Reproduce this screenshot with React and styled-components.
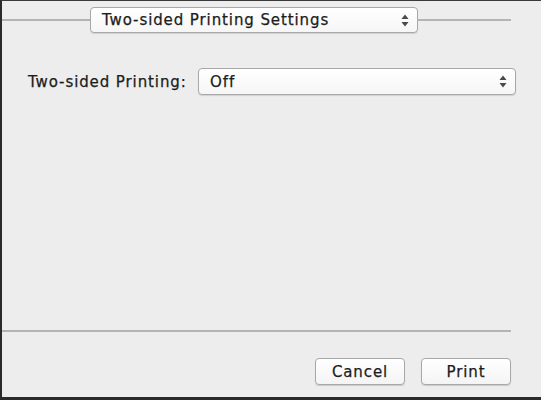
import React from "react";
import styled, { createGlobalStyle } from "styled-components";

const Global = createGlobalStyle`
  html, body { margin: 0; padding: 0; }
  body { background: #ececec; font-family: "DejaVu Sans", "Liberation Sans", sans-serif; }
`;

const Frame = styled.div`
  box-sizing: border-box;
  width: 541px;
  height: 400px;
  background: #ededed;
  border-left: 2px solid #2a2a2a;
  border-bottom: 3px solid #2a2a2a;
  border-top: 1px solid #3a3a3a;
  display: flex;
  flex-direction: column;
`;

const Header = styled.div`
  display: flex;
  align-items: center;
  height: 26px;
  margin: 6px 30px 0 0;
`;

const Rule = styled.div`
  height: 2px;
  background: #b4b4b4;
  flex: ${(p) => (p.$grow ? 1 : "none")};
  width: ${(p) => (p.$w ? `${p.$w}px` : "auto")};
  margin-right: ${(p) => p.$mr || 0}px;
`;

const textLook = `
  font-size: 15px;
  letter-spacing: 0.9px;
  color: #1c1c1c;
  -webkit-text-stroke: 0.25px #1c1c1c;
`;

const Popup = styled.div`
  box-sizing: border-box;
  display: flex;
  align-items: center;
  flex: ${(p) => (p.$w ? "none" : 1)};
  height: ${(p) => p.$h || 26}px;
  width: ${(p) => (p.$w ? `${p.$w}px` : "auto")};
  padding: 0 8px 0 11px;
  background: linear-gradient(#ffffff, #f6f6f6);
  border: 1px solid #a8a8a8;
  border-radius: 4px;
  box-shadow: 0 1px 1px rgba(0, 0, 0, 0.12);
  ${textLook}
`;

const PopupText = styled.span`
  flex: 1;
`;

const Arrows = () => (
  <svg width="8" height="13" viewBox="0 0 8 13">
    <path d="M4 0.5 L7.5 5 H0.5 Z" fill="#4a4a4a" />
    <path d="M4 12.5 L7.5 8 H0.5 Z" fill="#4a4a4a" />
  </svg>
);

const Body = styled.div`
  flex: 1;
  display: flex;
  flex-direction: column;
`;

const Row = styled.div`
  display: flex;
  align-items: center;
  margin-top: 35px;
  padding: 0 25px 0 26px;
`;

const Label = styled.span`
  ${textLook}
  width: 170px;
`;

const Footer = styled.div`
  display: flex;
  justify-content: flex-end;
  gap: 16px;
  padding: 26px 30px 12px 0;
`;

const Button = styled.button`
  box-sizing: border-box;
  width: 90px;
  height: 27px;
  background: linear-gradient(#ffffff, #f4f4f4);
  border: 1px solid #a8a8a8;
  border-radius: 4px;
  box-shadow: 0 1px 1px rgba(0, 0, 0, 0.15);
  font-family: "DejaVu Sans", "Liberation Sans", sans-serif;
  ${textLook}
  padding: 0;
`;

export default function App() {
  return (
    <>
      <Global />
      <Frame>
        <Header>
          <Rule $w={88} />
          <Popup $w={328}>
            <PopupText>Two-sided Printing Settings</PopupText>
            <Arrows />
          </Popup>
          <Rule $grow />
        </Header>
        <Body>
          <Row>
            <Label>Two-sided Printing:</Label>
            <Popup $h={27}>
              <PopupText>Off</PopupText>
              <Arrows />
            </Popup>
          </Row>
        </Body>
        <Rule $mr={30} />
        <Footer>
          <Button>Cancel</Button>
          <Button>Print</Button>
        </Footer>
      </Frame>
    </>
  );
}
